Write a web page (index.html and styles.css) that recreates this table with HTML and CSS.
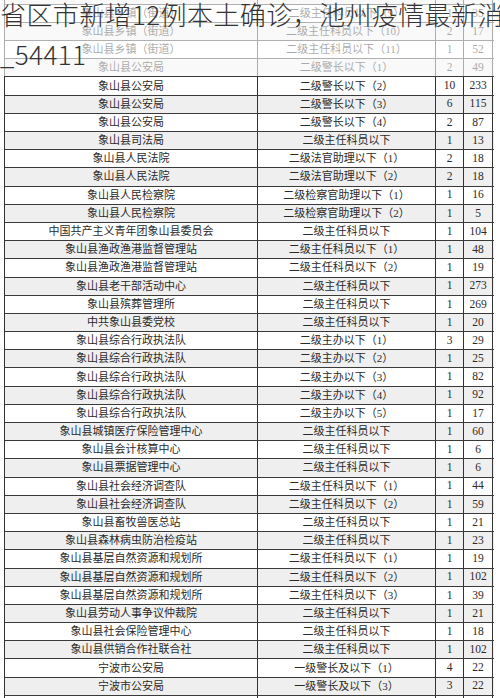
FILE: index.html
```html
<!DOCTYPE html>
<html lang="zh-CN">
<head>
<meta charset="utf-8">
<title>职位表</title>
<link rel="stylesheet" href="styles.css">
</head>
<body>
<div class="page">
  <div class="sheet">
    <div class="row"><div class="c">象山县乡镇（街道）</div><div class="c">二级主任科员以下（8）</div><div class="c n">1</div><div class="c n">21</div></div>
    <div class="row"><div class="c">象山县乡镇（街道）</div><div class="c">二级主任科员以下（9）</div><div class="c n">1</div><div class="c n">35</div></div>
    <div class="row"><div class="c">象山县乡镇（街道）</div><div class="c">二级主任科员以下（10）</div><div class="c n">2</div><div class="c n">17</div></div>
    <div class="row"><div class="c">象山县乡镇（街道）</div><div class="c">二级主任科员以下（11）</div><div class="c n">1</div><div class="c n">52</div></div>
    <div class="row"><div class="c">象山县公安局</div><div class="c">二级警长以下（1）</div><div class="c n">2</div><div class="c n">49</div></div>
    <div class="row"><div class="c">象山县公安局</div><div class="c">二级警长以下（2）</div><div class="c n">10</div><div class="c n">233</div></div>
    <div class="row"><div class="c">象山县公安局</div><div class="c">二级警长以下（3）</div><div class="c n">6</div><div class="c n">115</div></div>
    <div class="row"><div class="c">象山县公安局</div><div class="c">二级警长以下（4）</div><div class="c n">2</div><div class="c n">87</div></div>
    <div class="row"><div class="c">象山县司法局</div><div class="c">二级主任科员以下</div><div class="c n">1</div><div class="c n">13</div></div>
    <div class="row"><div class="c">象山县人民法院</div><div class="c">二级法官助理以下（1）</div><div class="c n">2</div><div class="c n">18</div></div>
    <div class="row"><div class="c">象山县人民法院</div><div class="c">二级法官助理以下（2）</div><div class="c n">2</div><div class="c n">18</div></div>
    <div class="row"><div class="c">象山县人民检察院</div><div class="c">二级检察官助理以下（1）</div><div class="c n">1</div><div class="c n">16</div></div>
    <div class="row"><div class="c">象山县人民检察院</div><div class="c">二级检察官助理以下（2）</div><div class="c n">1</div><div class="c n">5</div></div>
    <div class="row"><div class="c">中国共产主义青年团象山县委员会</div><div class="c">二级主任科员以下</div><div class="c n">1</div><div class="c n">104</div></div>
    <div class="row"><div class="c">象山县渔政渔港监督管理站</div><div class="c">二级主任科员以下（1）</div><div class="c n">1</div><div class="c n">48</div></div>
    <div class="row"><div class="c">象山县渔政渔港监督管理站</div><div class="c">二级主任科员以下（2）</div><div class="c n">1</div><div class="c n">19</div></div>
    <div class="row"><div class="c">象山县老干部活动中心</div><div class="c">二级主任科员以下</div><div class="c n">1</div><div class="c n">273</div></div>
    <div class="row"><div class="c">象山县殡葬管理所</div><div class="c">二级主任科员以下</div><div class="c n">1</div><div class="c n">269</div></div>
    <div class="row"><div class="c">中共象山县委党校</div><div class="c">二级主任科员以下</div><div class="c n">1</div><div class="c n">20</div></div>
    <div class="row"><div class="c">象山县综合行政执法队</div><div class="c">二级主办以下（1）</div><div class="c n">3</div><div class="c n">29</div></div>
    <div class="row"><div class="c">象山县综合行政执法队</div><div class="c">二级主办以下（2）</div><div class="c n">1</div><div class="c n">25</div></div>
    <div class="row"><div class="c">象山县综合行政执法队</div><div class="c">二级主办以下（3）</div><div class="c n">1</div><div class="c n">82</div></div>
    <div class="row"><div class="c">象山县综合行政执法队</div><div class="c">二级主办以下（4）</div><div class="c n">1</div><div class="c n">92</div></div>
    <div class="row"><div class="c">象山县综合行政执法队</div><div class="c">二级主办以下（5）</div><div class="c n">1</div><div class="c n">17</div></div>
    <div class="row"><div class="c">象山县城镇医疗保险管理中心</div><div class="c">二级主任科员以下</div><div class="c n">1</div><div class="c n">60</div></div>
    <div class="row"><div class="c">象山县会计核算中心</div><div class="c">二级主任科员以下</div><div class="c n">1</div><div class="c n">6</div></div>
    <div class="row"><div class="c">象山县票据管理中心</div><div class="c">二级主任科员以下</div><div class="c n">1</div><div class="c n">6</div></div>
    <div class="row"><div class="c">象山县社会经济调查队</div><div class="c">二级主任科员以下（1）</div><div class="c n">1</div><div class="c n">44</div></div>
    <div class="row"><div class="c">象山县社会经济调查队</div><div class="c">二级主任科员以下（2）</div><div class="c n">1</div><div class="c n">59</div></div>
    <div class="row"><div class="c">象山县畜牧兽医总站</div><div class="c">二级主任科员以下</div><div class="c n">1</div><div class="c n">21</div></div>
    <div class="row"><div class="c">象山县森林病虫防治检疫站</div><div class="c">二级主任科员以下</div><div class="c n">1</div><div class="c n">23</div></div>
    <div class="row"><div class="c">象山县基层自然资源和规划所</div><div class="c">二级主任科员以下（1）</div><div class="c n">1</div><div class="c n">19</div></div>
    <div class="row"><div class="c">象山县基层自然资源和规划所</div><div class="c">二级主任科员以下（2）</div><div class="c n">1</div><div class="c n">102</div></div>
    <div class="row"><div class="c">象山县基层自然资源和规划所</div><div class="c">二级主任科员以下（3）</div><div class="c n">1</div><div class="c n">39</div></div>
    <div class="row"><div class="c">象山县劳动人事争议仲裁院</div><div class="c">二级主任科员以下</div><div class="c n">1</div><div class="c n">21</div></div>
    <div class="row"><div class="c">象山县社会保险管理中心</div><div class="c">二级主任科员以下</div><div class="c n">1</div><div class="c n">18</div></div>
    <div class="row"><div class="c">象山县供销合作社联合社</div><div class="c">二级主任科员以下</div><div class="c n">1</div><div class="c n">102</div></div>
    <div class="row"><div class="c">宁波市公安局</div><div class="c">一级警长及以下（1）</div><div class="c n">4</div><div class="c n">22</div></div>
    <div class="row"><div class="c">宁波市公安局</div><div class="c">一级警长及以下（3）</div><div class="c n">3</div><div class="c n">22</div></div>
    <div class="row"><div class="c">宁波市公安局</div><div class="c">一级警长及以下（4）</div><div class="c n">2</div><div class="c n">17</div></div>
  </div>
  <div class="fade"></div>
  <h1 class="title"><span class="line">省区市新增12例本土确诊，池州疫情最新消</span><span class="line">_54411</span></h1>
</div>
</body>
</html>
```

FILE: styles.css
```css
html, body {
  margin: 0;
  padding: 0;
  background: #ffffff;
}

.page {
  position: relative;
  width: 500px;
  height: 698px;
  overflow: hidden;
  background: #ffffff;
}

.sheet {
  margin: -13.5px 0 0 4px;
  width: 489px;
  border-left: 1px solid #333333;
  font-family: "Liberation Serif", "Noto Sans CJK SC", serif;
  font-size: 11px;
  font-weight: 400;
  color: #2a2a2a;
}

.row {
  display: grid;
  grid-template-columns: 253px 178px 28px 29px;
  height: 18.2px;
  box-sizing: border-box;
  border-bottom: 1px solid #3a3a3a;
  background: #ffffff;
}

.row:nth-child(odd) {
  background: #efefef;
}

.c {
  display: flex;
  align-items: center;
  justify-content: center;
  box-sizing: border-box;
  border-right: 1px solid #333333;
  white-space: nowrap;
  line-height: 1;
  overflow: hidden;
}

.n {
  font-size: 11.5px;
}

.fade {
  position: absolute;
  left: 0;
  top: 0;
  width: 500px;
  height: 76px;
  background: rgba(255, 255, 255, 0.6);
}

.title {
  position: absolute;
  left: 0;
  top: -6px;
  margin: 0;
  font-family: "Noto Sans CJK SC", sans-serif;
  font-size: 26px;
  font-weight: 300;
  letter-spacing: 0.4px;
  line-height: 40px;
  color: #333333;
  white-space: nowrap;
}

.line {
  display: block;
}
```
